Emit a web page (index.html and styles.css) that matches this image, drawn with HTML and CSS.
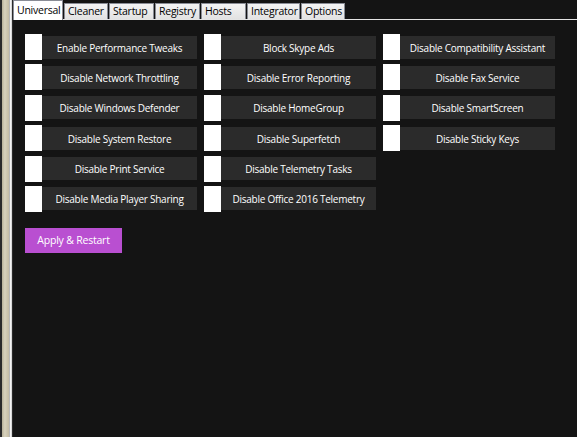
FILE: index.html
```html
<!DOCTYPE html>
<html>
<head>
<meta charset="utf-8">
<link rel="stylesheet" href="styles.css">
</head>
<body>
<div class="window">
  <div class="frame"><div class="frame-beige"></div><div class="frame-light"></div></div>
  <div class="main">
    <div class="tabs">
      <div class="tab active w-universal">Universal</div>
      <div class="tab w-cleaner">Cleaner</div>
      <div class="tab w-startup">Startup</div>
      <div class="tab w-registry">Registry</div>
      <div class="tab w-hosts">Hosts</div>
      <div class="tab w-integrator">Integrator</div>
      <div class="tab w-options">Options</div>
    </div>
    <div class="panel">
      <div class="grid">
        <div class="item"><span class="check"></span><span class="btn">Enable Performance Tweaks</span></div>
        <div class="item"><span class="check"></span><span class="btn">Block Skype Ads</span></div>
        <div class="item"><span class="check"></span><span class="btn">Disable Compatibility Assistant</span></div>
        <div class="item"><span class="check"></span><span class="btn">Disable Network Throttling</span></div>
        <div class="item"><span class="check"></span><span class="btn">Disable Error Reporting</span></div>
        <div class="item"><span class="check"></span><span class="btn">Disable Fax Service</span></div>
        <div class="item"><span class="check"></span><span class="btn">Disable Windows Defender</span></div>
        <div class="item"><span class="check"></span><span class="btn">Disable HomeGroup</span></div>
        <div class="item"><span class="check"></span><span class="btn">Disable SmartScreen</span></div>
        <div class="item"><span class="check"></span><span class="btn">Disable System Restore</span></div>
        <div class="item"><span class="check"></span><span class="btn">Disable Superfetch</span></div>
        <div class="item"><span class="check"></span><span class="btn">Disable Sticky Keys</span></div>
        <div class="item"><span class="check"></span><span class="btn">Disable Print Service</span></div>
        <div class="item"><span class="check"></span><span class="btn">Disable Telemetry Tasks</span></div>
        <div class="empty"></div>
        <div class="item"><span class="check"></span><span class="btn">Disable Media Player Sharing</span></div>
        <div class="item"><span class="check"></span><span class="btn">Disable Office 2016 Telemetry</span></div>
        <div class="empty"></div>
      </div>
      <div class="apply">Apply &amp; Restart</div>
    </div>
  </div>
</div>
</body>
</html>
```
FILE: styles.css
```css
html, body {
  margin: 0;
  padding: 0;
  background: #141414;
  width: 577px;
  height: 437px;
  overflow: hidden;
  font-family: "Open Sans", "Noto Sans", sans-serif;
}

.window {
  display: flex;
  width: 577px;
  height: 437px;
}

.frame {
  width: 13px;
  display: flex;
  background: #2a2a2a;
  padding-left: 2px;
  box-sizing: border-box;
}

.frame-beige {
  width: 7px;
  background: linear-gradient(to right, #b8b199, #d8d2bd 40%, #c4bca4);
}

.frame-light {
  width: 3px;
  background: linear-gradient(to right, #9a9a9a, #f4f4f4 50%, #c8c8c8);
}

.main {
  flex: 1;
  display: flex;
  flex-direction: column;
}

.tabs {
  height: 20px;
  display: flex;
  align-items: flex-end;
  border-bottom: 1px solid #e4e4e4;
  box-sizing: border-box;
  background: #141414;
  position: relative;
}

.tab {
  height: 16px;
  box-sizing: border-box;
  border: 1px solid #898c95;
  border-bottom: none;
  margin-right: 1px;
  background: linear-gradient(to bottom, #f4f4f4, #e2e2e2);
  color: #000;
  font-size: 10.5px;
  letter-spacing: -0.25px;
  line-height: 15px;
  padding-left: 3px;
  white-space: nowrap;
  overflow: hidden;
}

.tab.active {
  height: 20px;
  background: #ffffff;
  line-height: 18px;
  margin-bottom: -1px;
  position: relative;
}

.w-universal { width: 50px; }
.w-cleaner { width: 44px; }
.w-startup { width: 45px; }
.w-registry { width: 45px; }
.w-hosts { width: 45px; }
.w-integrator { width: 53px; }
.w-options { width: 44px; }

.panel {
  flex: 1;
  background: #141414;
  padding: 14px 0 0 12px;
}

.grid {
  display: grid;
  grid-template-columns: repeat(3, 172px);
  grid-auto-rows: 26px;
  column-gap: 7px;
  row-gap: 4.4px;
}

.item {
  display: flex;
  align-items: center;
}

.check {
  width: 17px;
  height: 26px;
  background: #ffffff;
  flex: none;
}

.btn {
  flex: 1;
  height: 22px;
  padding-top: 1px;
  background: #2b2b2b;
  color: #ffffff;
  font-size: 10px;
  letter-spacing: -0.25px;
  line-height: 23px;
  text-align: center;
  white-space: nowrap;
  overflow: hidden;
}

.apply {
  margin-top: 16px;
  width: 97px;
  height: 25px;
  background: #b94fd1;
  color: #ffffff;
  font-size: 10.5px;
  letter-spacing: -0.2px;
  line-height: 25px;
  text-align: center;
}
```
